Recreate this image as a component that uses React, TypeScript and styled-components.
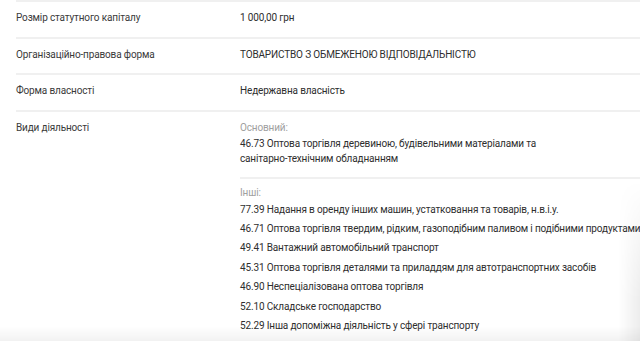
import React from 'react';
import styled, { createGlobalStyle } from 'styled-components';

const GlobalStyle = createGlobalStyle`
  html, body {
    margin: 0;
    padding: 0;
    background: #fff;
  }
  body {
    font-family: Roboto, "Liberation Sans", Arial, sans-serif;
    -webkit-font-smoothing: antialiased;
  }
`;

interface Activity {
  code: string;
  name: string;
}

const mainActivity: Activity = {
  code: '46.73',
  name: 'Оптова торгівля деревиною, будівельними матеріалами та санітарно-технічним обладнанням',
};

const otherActivities: Activity[] = [
  { code: '77.39', name: 'Надання в оренду інших машин, устатковання та товарів, н.в.і.у.' },
  { code: '46.71', name: 'Оптова торгівля твердим, рідким, газоподібним паливом і подібними продуктами' },
  { code: '49.41', name: 'Вантажний автомобільний транспорт' },
  { code: '45.31', name: 'Оптова торгівля деталями та приладдям для автотранспортних засобів' },
  { code: '46.90', name: 'Неспеціалізована оптова торгівля' },
  { code: '52.10', name: 'Складське господарство' },
  { code: '52.29', name: 'Інша допоміжна діяльність у сфері транспорту' },
];

export default function App() {
  return (
    <Page>
      <GlobalStyle />
      <Table>
        <Row>
          <Label>Розмір статутного капіталу</Label>
          <Value>1 000,00 грн</Value>
        </Row>
        <Row>
          <Label>Організаційно-правова форма</Label>
          <Value>ТОВАРИСТВО З ОБМЕЖЕНОЮ ВІДПОВІДАЛЬНІСТЮ</Value>
        </Row>
        <Row>
          <Label>Форма власності</Label>
          <Value>Недержавна власність</Value>
        </Row>
        <Row>
          <Label>Види діяльності</Label>
          <Value>
            <Group>
              <SubTitle>Основний:</SubTitle>
              <MainText>
                {mainActivity.code} {mainActivity.name}
              </MainText>
            </Group>
            <Group $divided>
              <SubTitle>Інші:</SubTitle>
              <List>
                {otherActivities.map((a) => (
                  <Item key={a.code}>
                    {a.code} {a.name}
                  </Item>
                ))}
              </List>
            </Group>
          </Value>
        </Row>
      </Table>
      <Shade />
    </Page>
  );
}

const Page = styled.div`
  position: relative;
  width: 640px;
  height: 341px;
  overflow: hidden;
  background: #fff;
`;

const Table = styled.div`
  display: flex;
  flex-direction: column;
  padding-left: 16px;
`;

const Row = styled.div`
  display: grid;
  grid-template-columns: 224px 1fr;
  border-top: 2px solid #f0f0f0;
  padding: 9px 0 11.5px;
  font-size: 10px;
  letter-spacing: -0.15px;
  line-height: 14px;
  color: #333;
`;

const Label = styled.div`
  color: #3a3a3a;
`;

const Value = styled.div`
  color: #2e2e2e;
  white-space: nowrap;
`;

const Group = styled.div<{ $divided?: boolean }>`
  display: flex;
  flex-direction: column;
  ${(p) =>
    p.$divided &&
    `
    margin-top: 11px;
    padding-top: 7px;
    border-top: 2px solid #f0f0f0;
  `}
`;

const SubTitle = styled.div`
  color: #a0a0a0;
  line-height: 14px;
`;

const MainText = styled.div`
  white-space: normal;
  width: 300px;
  line-height: 15px;
  margin-top: 1px;
`;

const List = styled.ul`
  list-style: none;
  margin: 0;
  padding: 0;
`;

const Item = styled.li`
  line-height: 19.4px;
`;

const Shade = styled.div`
  position: absolute;
  inset: 0;
  pointer-events: none;
  background:
    linear-gradient(to bottom, rgba(0, 0, 0, 0) 326px, rgba(0, 0, 0, 0.05) 341px),
    linear-gradient(to right, rgba(0, 0, 0, 0) 618px, rgba(0, 0, 0, 0.07) 640px);
  -webkit-mask-image: linear-gradient(to bottom, transparent 180px, #000 300px);
  mask-image: linear-gradient(to bottom, transparent 180px, #000 300px);
`;
